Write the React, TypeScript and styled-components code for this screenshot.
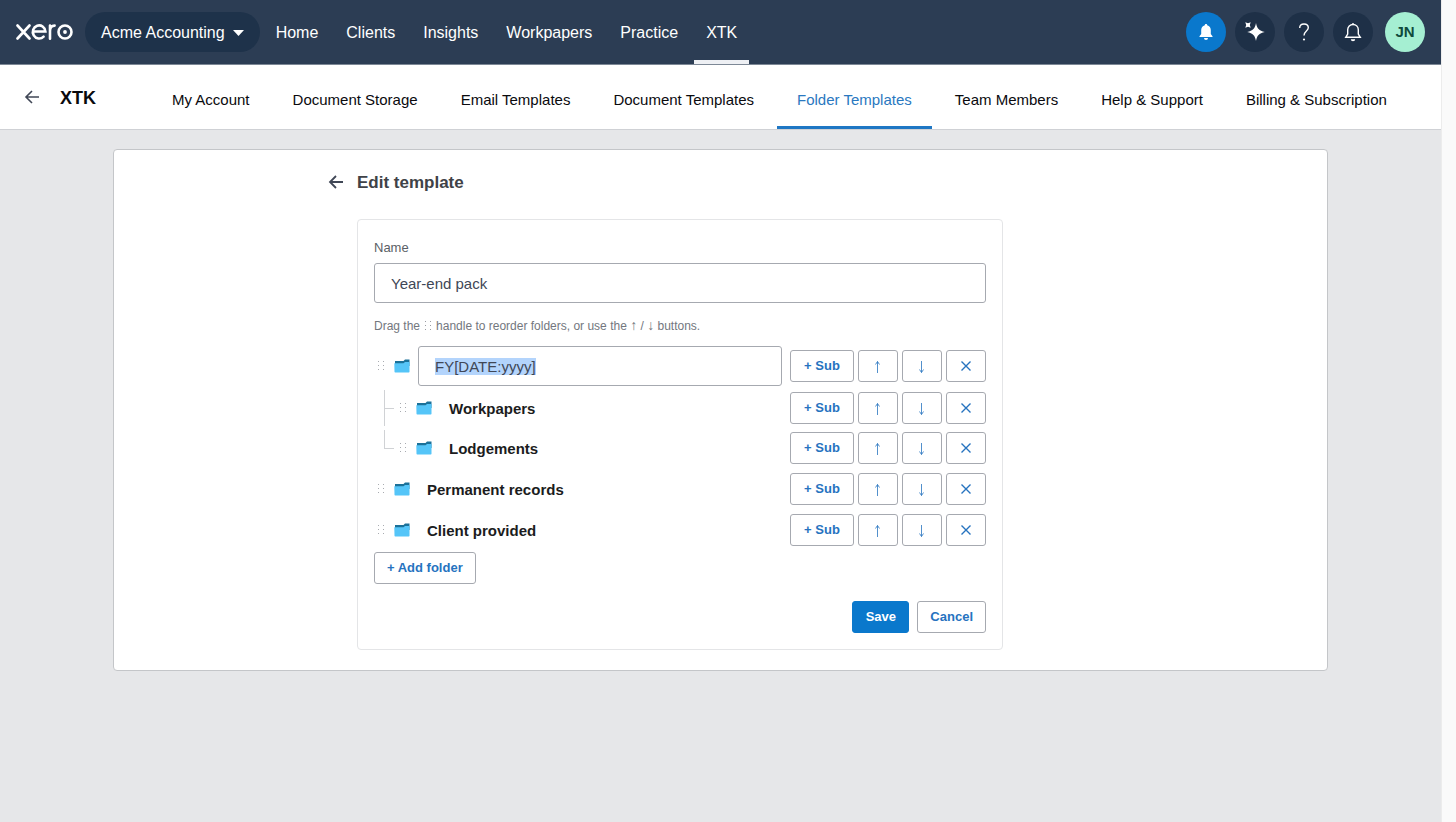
import React from "react";
import styled, { createGlobalStyle, css } from "styled-components";

const GlobalStyle = createGlobalStyle`
  *, *::before, *::after { box-sizing: border-box; }
  html, body, #root { min-height: 100vh; }
  body {
    margin: 0;
    background: #e6e7e9;
    color: #0a0a0e;
    font-family: "Liberation Sans", Arial, sans-serif;
    font-size: 15px;
    line-height: 20px;
  }
  ul { list-style: none; margin: 0; padding: 0; }
  h1, h2, p { margin: 0; }
  button, input { font: inherit; }
  a { color: inherit; text-decoration: none; }
`;

const Page = styled.div`
  display: grid;
  grid-template-columns: minmax(0, 1fr) 15px;
  min-height: 100vh;
`;

const Content = styled.div`
  min-width: 0;
`;

const ScrollTrack = styled.div`
  background: #fafafa;
  border-left: 1px solid #ececec;
`;

const TopBar = styled.header`
  display: flex;
  align-items: center;
  gap: 12px;
  height: 65px;
  padding: 0 16px;
  background: #2c3d54;
  border-bottom: 1px solid #7d8896;
  color: #fff;
  font-size: 16px;
`;

const TopNav = styled.nav`
  display: flex;
  align-items: center;
  gap: 4px;
  flex: 1;
  height: 100%;
`;

const OrgButton = styled.button`
  display: flex;
  align-items: center;
  gap: 8px;
  height: 40px;
  padding: 2px 16px 0;
  border: 0;
  border-radius: 20px;
  background: #1e324a;
  color: inherit;
  white-space: nowrap;
`;

const TopLink = styled.a<{ $active?: boolean }>`
  display: flex;
  align-items: center;
  height: 100%;
  padding: 6px 12px 0;
  border-bottom: 4px solid ${(p) => (p.$active ? "#eef0f4" : "transparent")};
`;

const TopActions = styled.div`
  display: flex;
  align-items: center;
  gap: 9px;
`;

const RoundButton = styled.button<{ $tone?: "blue" | "mint" }>`
  display: grid;
  place-items: center;
  width: 40px;
  height: 40px;
  padding: 0;
  border: 0;
  border-radius: 50%;
  font-size: 15px;
  font-weight: 700;
  background: ${(p) => (p.$tone === "blue" ? "#0a78cc" : p.$tone === "mint" ? "#a5efd2" : "#1e3047")};
  color: ${(p) => (p.$tone === "mint" ? "#0f4a3c" : "#fff")};
  ${(p) => p.$tone === "mint" && css`margin-left: 3px;`}
`;

const SubBar = styled.div`
  display: flex;
  align-items: stretch;
  height: 65px;
  padding-left: 24px;
  background: #fff;
  border-bottom: 1px solid #cfd1d5;
`;

const AppTitle = styled.div`
  display: flex;
  align-items: center;
  gap: 20px;
  width: 128px;
`;

const AppName = styled.h1`
  padding-top: 2px;
  font-size: 18px;
  line-height: 24px;
`;

const BackLink = styled.a`
  display: flex;
  color: #404756;
`;

const Tabs = styled.nav`
  display: flex;
  gap: 3px;
`;

const Tab = styled.a<{ $active?: boolean }>`
  display: flex;
  align-items: center;
  padding: 8px 20px 0;
  white-space: nowrap;
  color: ${(p) => (p.$active ? "#2a78c0" : "inherit")};
  border-bottom: 3px solid ${(p) => (p.$active ? "#1f77c4" : "transparent")};
`;

const Panel = styled.main`
  max-width: 1215px;
  margin: 19px auto;
  padding: 20px 0;
  background: #fff;
  border: 1px solid #c4c6c9;
  border-radius: 4px;
`;

const Column = styled.div`
  max-width: 809px;
  margin: 0 auto;
  padding-left: 12px;
`;

const Heading = styled.div`
  display: flex;
  align-items: center;
  gap: 13px;
  height: 24px;
`;

const Title = styled.h2`
  padding-top: 2px;
  font-size: 17px;
  line-height: 24px;
  color: #404247;
`;

const Card = styled.form`
  max-width: 646px;
  margin: 25px 0 0 29px;
  padding: 16px;
  border: 1px solid #e4e5e7;
  border-radius: 4px;
`;

const Label = styled.label`
  display: block;
  margin-bottom: 5px;
  padding-top: 2px;
  font-size: 13px;
  line-height: 20px;
  color: #5b5f66;
`;

const TextField = styled.input`
  display: block;
  width: 100%;
  height: 40px;
  padding: 0 16px;
  border: 1px solid #a6a9b0;
  border-radius: 3px;
  background: #fff;
  color: #404756;
  outline: none;
  &::selection { background: #b3d4fc; color: #404756; }
`;

const Hint = styled.p`
  display: flex;
  align-items: center;
  gap: 4px;
  margin: 12px 0 10px;
  font-size: 12px;
  line-height: 20px;
  color: #73777e;
`;

const HintArrow = styled.span`
  font-size: 14px;
`;

const FolderList = styled.ul`
  display: grid;
  gap: 1px;
`;

const SubList = styled.ul`
  margin-top: 2px;
`;

const SubItem = styled.li`
  display: grid;
  grid-template-columns: 22px minmax(0, 1fr);
`;

const Branch = styled.span<{ $last?: boolean }>`
  display: grid;
  grid-template-rows: 19px 17px;
  width: 10px;
  margin: 2px 0 2px 10px;
  &::before, &::after { content: ""; border-left: 1px solid #d0d2d5; }
  &::before { border-bottom: 1px solid #d0d2d5; }
  ${(p) => p.$last && css`&::after { border-left-color: transparent; }`}
`;

const Row = styled.div`
  display: flex;
  align-items: center;
  min-height: 40px;
`;

const Grip = styled.span`
  display: flex;
  width: 20px;
  padding-left: 3px;
  cursor: grab;
`;

const FolderBox = styled.span`
  display: flex;
  width: 24px;
`;

const NameBox = styled.div`
  flex: 1;
  min-width: 0;
`;

const FolderName = styled.strong`
  display: block;
  padding: 1px 0 0 9px;
  color: #1b1c20;
`;

const RowActions = styled.div`
  display: flex;
  gap: 4px;
  margin-left: 8px;
`;

const Button = styled.button<{ $primary?: boolean; $square?: boolean }>`
  display: flex;
  align-items: center;
  justify-content: center;
  height: 32px;
  min-width: ${(p) => (p.$square ? "40px" : "64px")};
  padding: ${(p) => (p.$square ? "0" : "0 12px")};
  border: 1px solid ${(p) => (p.$primary ? "#0a78cc" : "#a6a9b0")};
  border-radius: 3px;
  background: ${(p) => (p.$primary ? "#0a78cc" : "#fff")};
  color: ${(p) => (p.$primary ? "#fff" : "#2673bf")};
  font-size: 13px;
  font-weight: 700;
  white-space: nowrap;
`;

const SaveButton = styled(Button)`
  min-width: 57px;
`;

const AddRow = styled.div`
  display: flex;
  margin-top: 2px;
`;

const FormActions = styled.div`
  display: flex;
  justify-content: flex-end;
  gap: 8px;
  margin-top: 17px;
`;

const BackArrow = ({ bold }: { bold?: boolean }) => (
  <svg width="16" height="16" viewBox="0 0 16 16" fill="none" stroke="currentColor" strokeWidth={bold ? 1.8 : 1.6}>
    <path d="M15 8H2M8 2L2 8l6 6" />
  </svg>
);

const MoveArrow = ({ down }: { down?: boolean }) => (
  <svg width="8" height="14" viewBox="0 0 8 14" fill="none" stroke="currentColor" strokeWidth="0.8">
    <path d={down ? "M3.500 2v11.500M1.500 10.500l2 3 2-3" : "M3.500 14V2.500M1.500 5.500l2-3 2 3"} />
  </svg>
);

const Logo = () => (
  <svg width="57" height="18" viewBox="0 0 57 18" fill="none" stroke="#fff" strokeWidth="2.6" strokeLinecap="round" aria-label="xero" role="img">
    <path d="M1.500 2.500l12 13M13.500 2.500l-12 13" />
    <path d="M17 8.500h12.400A6.300 6.600 0 1 0 27.600 13.600" />
    <path d="M34 15.700V2.500M34 8c0-3.500 2-5.400 4.600-5.400" />
    <circle cx="49" cy="9" r="6.500" />
    <circle cx="49" cy="9" r="1.900" fill="#fff" stroke="none" />
  </svg>
);

const Dots = ({ dim }: { dim?: boolean }) => (
  <svg width="8" height="12" viewBox="0 0 8 12" fill={dim ? "#9a9da3" : "#a8abb0"} aria-hidden="true">
    {[0, 5].map((x) => [1, 5, 9].map((y) => <rect key={`${x}-${y}`} x={x + 1} y={y} width="1" height="1" />))}
  </svg>
);

const FolderIcon = () => (
  <svg width="16" height="14" viewBox="0 0 16 14" aria-hidden="true">
    <path d="M1 2h8.500L11 .5h4.500V7H1z" fill="#1b7199" />
    <path d="M.3 4.300H9.500l1.500-1.300H15.500v9.800a.7.7 0 0 1-.7.7H1.200a.7.7 0 0 1-.7-.7z" fill="#55c5f8" />
  </svg>
);

const topLinks = ["Home", "Clients", "Insights", "Workpapers", "Practice", "XTK"];
const tabs = [
  "My Account", "Document Storage", "Email Templates", "Document Templates",
  "Folder Templates", "Team Members", "Help & Support", "Billing & Subscription",
];

const FolderRow = ({ name, editing }: { name: string; editing?: boolean }) => {
  const field = React.useRef<HTMLInputElement>(null);
  React.useEffect(() => {
    if (editing && field.current) {
      field.current.focus();
      field.current.select();
    }
  }, [editing]);
  return (
    <Row>
      <Grip><Dots /></Grip>
      <FolderBox><FolderIcon /></FolderBox>
      <NameBox>
        {editing ? <TextField ref={field} aria-label="Folder name" defaultValue={name} /> : <FolderName>{name}</FolderName>}
      </NameBox>
      <RowActions>
        <Button type="button">+ Sub</Button>
        <Button type="button" $square aria-label={`Move ${name} up`}><MoveArrow /></Button>
        <Button type="button" $square aria-label={`Move ${name} down`}><MoveArrow down /></Button>
        <Button type="button" $square aria-label={`Remove ${name}`}>
          <svg width="12" height="12" viewBox="0 0 12 12" fill="none" stroke="currentColor" strokeWidth="1.4">
            <path d="M1.500 1.500l9 9M10.500 1.500l-9 9" />
          </svg>
        </Button>
      </RowActions>
    </Row>
  );
};

export default function App() {
  return (
    <Page>
      <GlobalStyle />
      <Content>
        <TopBar>
          <Logo />
          <TopNav>
            <OrgButton type="button">
              Acme Accounting
              <svg width="11" height="6" viewBox="0 0 11 6" fill="#fff"><path d="M0 0h11L5.500 6z" /></svg>
            </OrgButton>
            {topLinks.map((t) => <TopLink key={t} href="#" $active={t === "XTK"}>{t}</TopLink>)}
          </TopNav>
          <TopActions>
            <RoundButton $tone="blue" aria-label="Alerts">
              <svg width="16" height="18" viewBox="0 0 16 18" fill="#fff">
                <path d="M8 1c.8 0 1.200.5 1.200 1.200C11.500 2.800 12.800 4.700 12.800 7v4l1.700 2.200v.8h-13v-.8L3.200 11V7c0-2.300 1.300-4.200 3.600-4.800C6.800 1.500 7.200 1 8 1zM6 15h4a2 2 0 0 1-4 0z" />
              </svg>
            </RoundButton>
            <RoundButton aria-label="Assistant">
              <svg width="20" height="20" viewBox="0 0 20 20" fill="#fff">
                <path d="M11 1c1 5.500 3 7.700 8.800 9-5.800 1.300-7.800 3.500-8.800 9-1-5.500-3-7.700-8.800-9 5.800-1.300 7.800-3.500 8.800-9z" />
                <path d="M.3.3l2.700.9L5.700.3l-.9 2.700.9 2.700L3 4.800l-2.700.9.900-2.700z" />
              </svg>
            </RoundButton>
            <RoundButton aria-label="Help">
              <svg width="12" height="18" viewBox="0 0 12 18" fill="none" stroke="#fff" strokeWidth="1.400">
                <path d="M1.700 5C1.700 2.500 3.500 1 6 1s4.300 1.500 4.300 3.800C10.300 8 6 8.200 6 12.500" />
                <circle cx="6" cy="16.500" r="1.100" fill="#fff" stroke="none" />
              </svg>
            </RoundButton>
            <RoundButton aria-label="Notifications">
              <svg width="18" height="20" viewBox="0 0 18 20" fill="none" stroke="#fff" strokeWidth="1.400">
                <path d="M9 1v1.500M3.700 12V7.800C3.700 4.800 6 2.500 9 2.500s5.300 2.300 5.300 5.300V12l2 3.300H1.700z" />
                <path d="M6.800 17.200h4.400a2.200 2 0 0 1-4.400 0z" fill="#fff" stroke="none" />
              </svg>
            </RoundButton>
            <RoundButton $tone="mint">JN</RoundButton>
          </TopActions>
        </TopBar>
        <SubBar>
          <AppTitle>
            <BackLink href="#" aria-label="Back"><BackArrow /></BackLink>
            <AppName>XTK</AppName>
          </AppTitle>
          <Tabs>
            {tabs.map((t) => <Tab key={t} href="#" $active={t === "Folder Templates"}>{t}</Tab>)}
          </Tabs>
        </SubBar>
        <Panel>
          <Column>
            <Heading>
              <BackLink href="#" aria-label="Back to templates"><BackArrow bold /></BackLink>
              <Title>Edit template</Title>
            </Heading>
            <Card onSubmit={(e) => e.preventDefault()}>
              <Label htmlFor="template-name">Name</Label>
              <TextField id="template-name" defaultValue="Year-end pack" />
              <Hint>
                Drag the <Dots dim />
                <span>handle to reorder folders, or use the <HintArrow>↑</HintArrow> / <HintArrow>↓</HintArrow> buttons.</span>
              </Hint>
              <FolderList>
                <li>
                  <FolderRow name="FY[DATE:yyyy]" editing />
                  <SubList>
                    <SubItem><Branch /><FolderRow name="Workpapers" /></SubItem>
                    <SubItem><Branch $last /><FolderRow name="Lodgements" /></SubItem>
                  </SubList>
                </li>
                <li><FolderRow name="Permanent records" /></li>
                <li><FolderRow name="Client provided" /></li>
              </FolderList>
              <AddRow><Button type="button">+ Add folder</Button></AddRow>
              <FormActions>
                <SaveButton type="submit" $primary>Save</SaveButton>
                <Button type="button">Cancel</Button>
              </FormActions>
            </Card>
          </Column>
        </Panel>
      </Content>
      <ScrollTrack />
    </Page>
  );
}
